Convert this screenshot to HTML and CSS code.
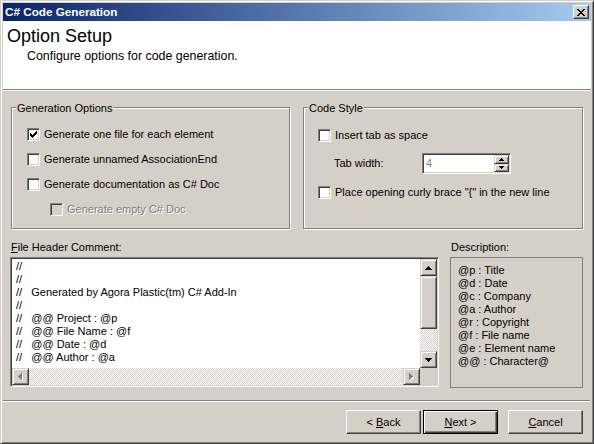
FILE: index.html
```html
<!DOCTYPE html>
<html>
<head>
<meta charset="utf-8">
<title>C# Code Generation</title>
<link rel="stylesheet" href="styles.css">
</head>
<body>
<div class="window">
  <div class="titlebar">
    <span class="title">C# Code Generation</span>
    <span class="close"><svg width="8" height="7" viewBox="0 0 8 7" shape-rendering="crispEdges"><path d="M0 0h2v1H0z M6 0h2v1H6z M1 1h2v1H1z M5 1h2v1H5z M2 2h4v1H2z M3 3h2v1H3z M2 4h4v1H2z M1 5h2v1H1z M5 5h2v1H5z M0 6h2v1H0z M6 6h2v1H6z" fill="#000"/></svg></span>
  </div>
  <div class="header">
    <div class="h-title">Option Setup</div>
    <div class="h-sub">Configure options for code generation.</div>
  </div>
  <div class="main">
    <div class="groups">
      <div class="group g1">
        <div class="legend">Generation Options</div>
        <div class="rows rows1">
          <div class="opt"><span class="cb"><svg width="11" height="11" viewBox="0 0 11 11" shape-rendering="crispEdges"><path transform="translate(2 2)" d="M0 2h1v3H0z M1 3h1v3H1z M2 4h1v3H2z M3 3h1v3H3z M4 2h1v3H4z M5 1h1v3H5z M6 0h1v3H6z" fill="#000"/></svg></span>Generate one file for each element</div>
          <div class="opt"><span class="cb"></span>Generate unnamed AssociationEnd</div>
          <div class="opt"><span class="cb"></span>Generate documentation as C# Doc</div>
          <div class="opt disabled"><span class="cb"></span>Generate empty C# Doc</div>
        </div>
      </div>
      <div class="group g2">
        <div class="legend">Code Style</div>
        <div class="rows rows2">
          <div class="opt r-a"><span class="cb"></span>Insert tab as space</div>
          <div class="opt r-b">
            <span class="tw-label">Tab width:</span>
            <span class="spin">
              <span class="spin-val">4</span>
              <span class="spin-btns">
                <span class="sbtn"><svg width="5" height="3" viewBox="0 0 5 3" shape-rendering="crispEdges"><path d="M2 0h1v1H2z M1 1h3v1H1z M0 2h5v1H0z" fill="#000"/></svg></span>
                <span class="sbtn"><svg width="5" height="3" viewBox="0 0 5 3" shape-rendering="crispEdges"><path d="M0 0h5v1H0z M1 1h3v1H1z M2 2h1v1H2z" fill="#000"/></svg></span>
              </span>
            </span>
          </div>
          <div class="opt r-b"><span class="cb"></span>Place opening curly brace "{" in the new line</div>
        </div>
      </div>
    </div>
    <div class="lower">
      <div class="col-left">
        <div class="lbl"><u>F</u>ile Header Comment:</div>
        <div class="editor">
          <div class="code">//
//
//   Generated by Agora Plastic(tm) C# Add-In
//
//   @@ Project : @p
//   @@ File Name : @f
//   @@ Date : @d
//   @@ Author : @a</div>
          <div class="vscroll">
            <span class="sb-btn"><svg width="7" height="4" viewBox="0 0 7 4" shape-rendering="crispEdges"><path d="M3 0h1v1H3z M2 1h3v1H2z M1 2h5v1H1z M0 3h7v1H0z" fill="#000"/></svg></span>
            <span class="sb-thumb"></span>
            <span class="sb-track"></span>
            <span class="sb-btn"><svg width="7" height="4" viewBox="0 0 7 4" shape-rendering="crispEdges"><path d="M0 0h7v1H0z M1 1h5v1H1z M2 2h3v1H2z M3 3h1v1H3z" fill="#000"/></svg></span>
          </div>
          <div class="hscroll">
            <span class="sb-btn"><svg width="5" height="8" viewBox="0 0 5 8" shape-rendering="crispEdges"><path d="M4 1h1v7H4z M3 2h1v5H3z M2 3h1v3H2z M1 4h1v1H1z" fill="#fff"/><path d="M3 0h1v7H3z M2 1h1v5H2z M1 2h1v3H1z M0 3h1v1H0z" fill="#808080"/></svg></span>
            <span class="sb-track"></span>
            <span class="sb-btn"><svg width="5" height="8" viewBox="0 0 5 8" shape-rendering="crispEdges"><path d="M1 1h1v7H1z M2 2h1v5H2z M3 3h1v3H3z M4 4h1v1H4z" fill="#fff"/><path d="M0 0h1v7H0z M1 1h1v5H1z M2 2h1v3H2z M3 3h1v1H3z" fill="#808080"/></svg></span>
          </div>
          <div class="corner"></div>
        </div>
      </div>
      <div class="col-right">
        <div class="lbl">Description:</div>
        <div class="desc">@p : Title<br>@d : Date<br>@c : Company<br>@a : Author<br>@r : Copyright<br>@f : File name<br>@e : Element name<br>@@ : Character@</div>
      </div>
    </div>
  </div>
  <div class="sep"></div>
  <div class="buttons">
    <span class="btn btn-back"><span class="btn-text">&lt; <u>B</u>ack</span></span>
    <span class="btn btn-default"><span class="btn-text"><u>N</u>ext &gt;</span></span>
    <span class="btn btn-cancel"><span class="btn-text"><u>C</u>ancel</span></span>
  </div>
</div>
</body>
</html>
```
FILE: styles.css
```css
* { box-sizing: border-box; }
html, body { margin: 0; padding: 0; }
body {
  width: 594px;
  height: 444px;
  overflow: hidden;
  background: #d4d0c8;
  font-family: "Liberation Sans", Arial, sans-serif;
  font-size: 11px;
  line-height: 13px;
  color: #000;
}
.window {
  width: 594px;
  height: 444px;
  background: #d4d0c8;
  border: 1px solid;
  border-color: #d4d0c8 #404040 #404040 #d4d0c8;
  box-shadow: inset 1px 1px 0 #fff, inset -1px -1px 0 #808080;
  padding: 2px;
  display: flex;
  flex-direction: column;
}
.titlebar {
  height: 18px;
  flex: none;
  background: linear-gradient(to right, #0a246a, #a6caf0);
  display: flex;
  align-items: center;
  justify-content: space-between;
  padding: 0 2px;
}
.title {
  color: #fff;
  font-weight: bold;
  font-size: 11.7px;
  line-height: 14px;
}
.close {
  width: 16px;
  height: 14px;
  background: #d4d0c8;
  border: 1px solid;
  border-color: #fff #404040 #404040 #fff;
  box-shadow: inset -1px -1px 0 #808080;
  display: flex;
  align-items: center;
  justify-content: center;
  padding-right: 1px;
}
.close svg { display: block; }
.header {
  height: 69px;
  flex: none;
  background: #fff;
  border-bottom: 1px solid #808080;
  box-shadow: 0 1px 0 #fff;
}
.h-title {
  font-size: 18px;
  line-height: 21px;
  padding: 5px 0 0 4px;
}
.h-sub {
  font-size: 12.4px;
  line-height: 14px;
  padding: 2px 0 0 24px;
}
.groups {
  display: flex;
  gap: 13px;
  padding: 0 8px;
  margin-top: 17px;
}
.group {
  border: 1px solid #808080;
  box-shadow: inset 1px 1px 0 #fff, 1px 1px 0 #fff;
}
.g1 { width: 279px; flex: none; }
.g2 { flex: 1; }
.legend {
  display: table;
  margin: -6px 0 0 4px;
  padding: 0 1px;
  background: #d4d0c8;
}
.rows1 { padding: 7px 0 6px 15px; }
.rows2 { padding: 7px 0 0 14px; }
.opt {
  display: flex;
  align-items: center;
  height: 25px;
  white-space: nowrap;
}
.r-a { height: 27px; }
.r-b { height: 29px; }
.cb {
  width: 13px;
  height: 13px;
  flex: none;
  margin-right: 4px;
  background: #fff;
  border: 1px solid;
  border-color: #808080 #fff #fff #808080;
  box-shadow: inset 1px 1px 0 #404040, inset -1px -1px 0 #d4d0c8;
}
.cb svg { display: block; }
.disabled { margin-left: 23px; color: #808080; text-shadow: 1px 1px 0 #fff; }
.disabled .cb { background: #d4d0c8; }
.tw-label { width: 88px; margin-left: 16px; flex: none; }
.spin {
  width: 89px;
  height: 21px;
  display: flex;
  background: #fff;
  border: 1px solid;
  border-color: #808080 #fff #fff #808080;
  box-shadow: inset 1px 1px 0 #404040, inset -1px -1px 0 #d4d0c8;
  padding: 1px;
}
.spin-val {
  flex: 1;
  color: #808080;
  padding-left: 2px;
  line-height: 17px;
}
.spin-btns {
  width: 15px;
  display: flex;
  flex-direction: column;
}
.sbtn {
  flex: 1;
  background: #d4d0c8;
  border: 1px solid;
  border-color: #d4d0c8 #404040 #404040 #d4d0c8;
  box-shadow: inset 1px 1px 0 #fff, inset -1px -1px 0 #808080;
  display: flex;
  align-items: center;
  justify-content: center;
}
.sbtn svg { display: block; }
.lower {
  display: flex;
  gap: 11px;
  padding-left: 7px;
  margin-top: 12px;
}
.col-left { width: 429px; flex: none; }
.col-right { width: 133px; flex: none; }
.lbl { padding-left: 1px; margin-bottom: 3px; }
.editor {
  height: 130px;
  background: #fff;
  border: 1px solid;
  border-color: #808080 #fff #fff #808080;
  box-shadow: inset 1px 1px 0 #404040, inset -1px -1px 0 #d4d0c8;
  padding: 1px;
  display: grid;
  grid-template-columns: 1fr 17px;
  grid-template-rows: 1fr 17px;
}
.code {
  white-space: pre;
  padding: 1px 0 0 4px;
  overflow: hidden;
}
.vscroll, .hscroll {
  display: flex;
}
.vscroll { flex-direction: column; }
.sb-btn {
  width: 17px;
  height: 17px;
  flex: none;
  background: #d4d0c8;
  border: 1px solid;
  border-color: #d4d0c8 #404040 #404040 #d4d0c8;
  box-shadow: inset 1px 1px 0 #fff, inset -1px -1px 0 #808080;
  display: flex;
  align-items: center;
  justify-content: center;
}
.sb-btn svg { display: block; }
.sb-thumb {
  height: 53px;
  flex: none;
  background: #d4d0c8;
  border: 1px solid;
  border-color: #d4d0c8 #404040 #404040 #d4d0c8;
  box-shadow: inset 1px 1px 0 #fff, inset -1px -1px 0 #808080;
}
.sb-track {
  flex: 1;
  background: repeating-conic-gradient(#d4d0c8 0 25%, #fff 0 50%) 0 0 / 2px 2px;
}
.corner { background: #d4d0c8; }
.desc {
  height: 131px;
  border: 1px solid #808080;
  padding: 6px 0 0 7px;
}
.sep {
  flex: none;
  margin-top: 12px;
  margin-right: 1px;
  border-top: 1px solid #808080;
  border-bottom: 1px solid #fff;
}
.buttons {
  display: flex;
  justify-content: flex-end;
  margin-top: 8px;
  padding-right: 8px;
}
.btn {
  width: 75px;
  height: 24px;
  display: flex;
  align-items: center;
  justify-content: center;
  background: #d4d0c8;
  border: 1px solid;
  border-color: #fff #404040 #404040 #fff;
  box-shadow: inset -1px -1px 0 #808080;
}
.btn-text { white-space: pre; }
.btn-back { margin-right: 2px; }
.btn-default {
  border: 1px solid #000;
  box-shadow: inset 1px 1px 0 #fff, inset -1px -1px 0 #404040, inset -2px -2px 0 #808080;
  margin-right: 10px;
}
```
